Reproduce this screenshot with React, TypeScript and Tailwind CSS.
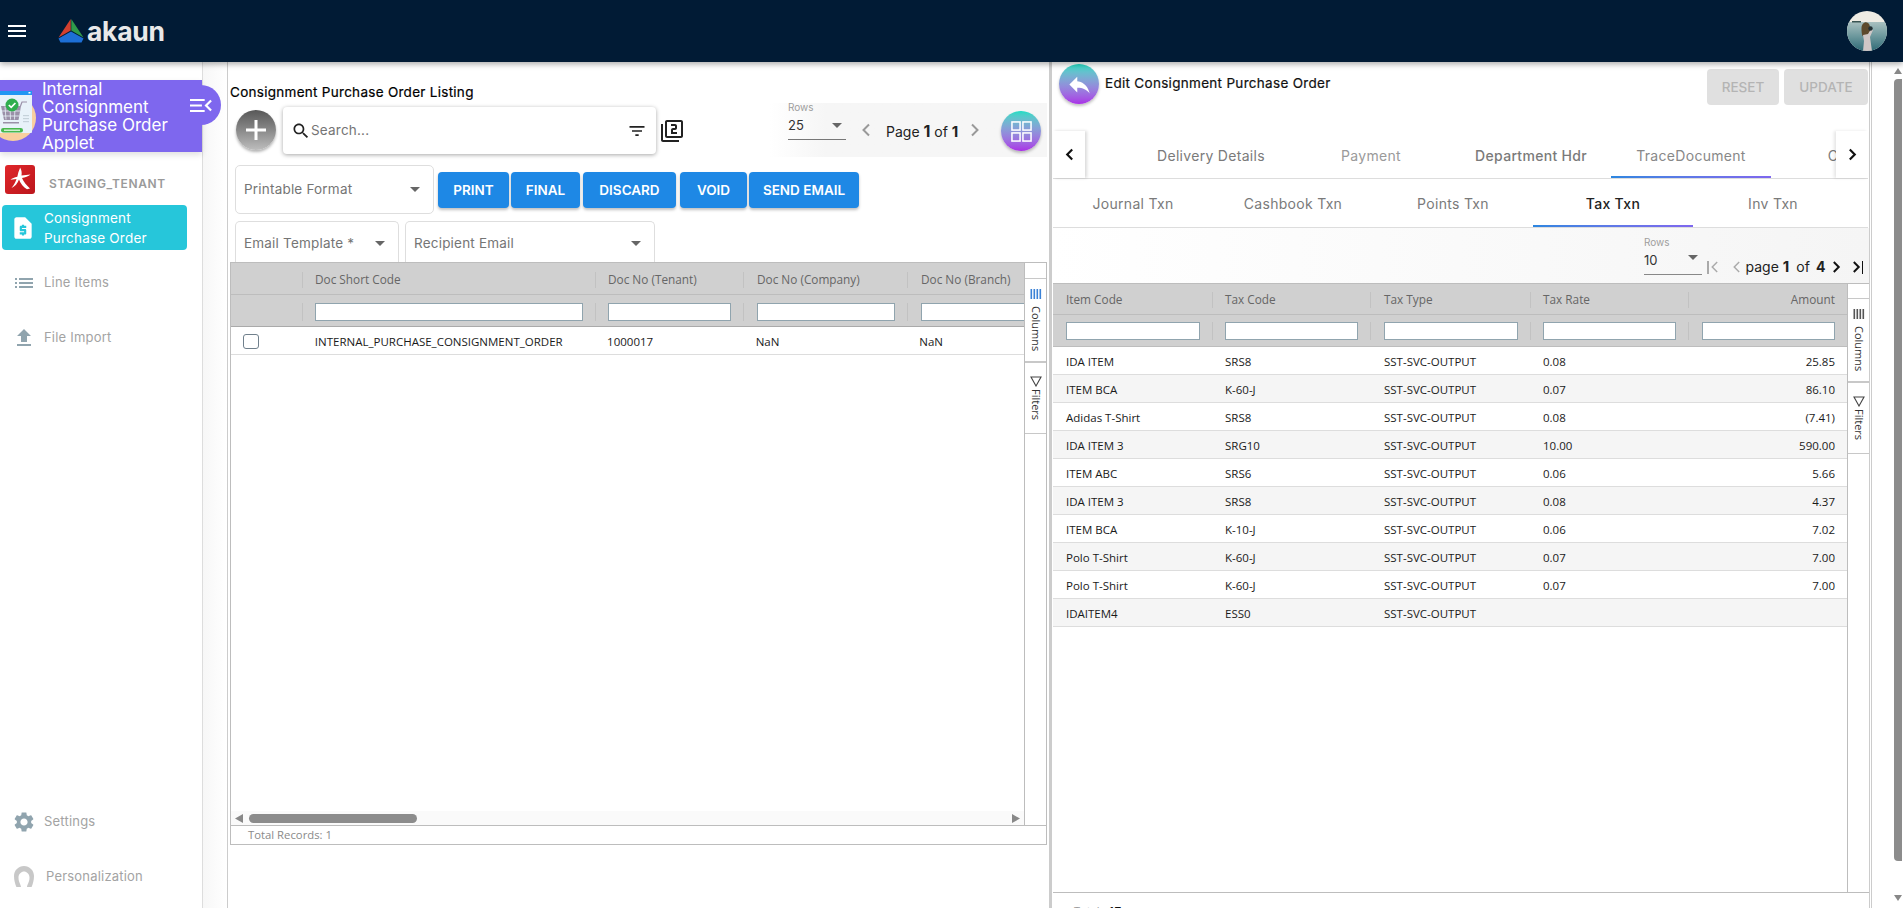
import React from "react";

const P = ({ d, className = "", fill = "currentColor" }: { d: string; className?: string; fill?: string }) => (
  <svg viewBox="0 0 24 24" className={className} fill={fill}><path d={d} /></svg>
);
const icons = {
  menu: "M3 18h18v-2H3v2zm0-5h18v-2H3v2zm0-7v2h18V6H3z",
  search: "M15.5 14h-.79l-.28-.27C15.41 12.59 16 11.11 16 9.5 16 5.91 13.09 3 9.5 3S3 5.91 3 9.5 5.91 16 9.5 16c1.61 0 3.09-.59 4.23-1.57l.27.28v.79l5 4.99L20.49 19l-4.99-5zm-6 0C7.01 14 5 11.99 5 9.5S7.01 5 9.5 5 14 7.01 14 9.5 11.99 14 9.5 14z",
  filter: "M10 18h4v-2h-4v2zM3 6v2h18V6H3zm3 7h12v-2H6v2z",
  filter2: "M3 5H1v16c0 1.1.9 2 2 2h16v-2H3V5zm18-4H7c-1.1 0-2 .9-2 2v14c0 1.1.9 2 2 2h14c1.1 0 2-.9 2-2V3c0-1.1-.9-2-2-2zm0 16H7V3h14v14zm-4-4h-4v-2h2c1.1 0 2-.89 2-2V7c0-1.11-.9-2-2-2h-4v2h4v2h-2c-1.1 0-2 .89-2 2v4h6v-2z",
  reply: "M10 9V5l-7 7 7 7v-4.1c5 0 8.5 1.6 11 5.1-1-5-4-10-11-11z",
  settings: "M19.14 12.94c.04-.3.06-.61.06-.94 0-.32-.02-.64-.07-.94l2.03-1.58c.18-.14.23-.41.12-.61l-1.92-3.32c-.12-.22-.37-.29-.59-.22l-2.39.96c-.5-.38-1.03-.7-1.62-.94l-.36-2.54c-.04-.24-.24-.41-.48-.41h-3.84c-.24 0-.43.17-.47.41l-.36 2.54c-.59.24-1.13.57-1.62.94l-2.39-.96c-.22-.08-.47 0-.59.22L2.74 8.87c-.12.21-.08.47.12.61l2.03 1.58c-.05.3-.09.63-.09.94s.02.64.07.94l-2.03 1.58c-.18.14-.23.41-.12.61l1.92 3.32c.12.22.37.29.59.22l2.39-.96c.5.38 1.03.7 1.62.94l.36 2.54c.05.24.24.41.48.41h3.84c.24 0 .44-.17.47-.41l.36-2.54c.59-.24 1.13-.56 1.62-.94l2.39.96c.22.08.47 0 .59-.22l1.92-3.32c.12-.22.07-.47-.12-.61l-2.01-1.58zM12 15.6c-1.98 0-3.6-1.62-3.6-3.6s1.62-3.6 3.6-3.6 3.6 1.62 3.6 3.6-1.62 3.6-3.6 3.6z",
  list: "M3 13h2v-2H3v2zm0 4h2v-2H3v2zm0-8h2V7H3v2zm4 4h14v-2H7v2zm0 4h14v-2H7v2zM7 7v2h14V7H7z",
  upload: "M9 16h6v-6h4l-7-7-7 7h4zm-4 2h14v2H5z",
  quote: "M14 2H6c-1.1 0-1.99.9-1.99 2L4 20c0 1.1.89 2 1.99 2H18c1.1 0 2-.9 2-2V8l-6-6zm1 10h-4v1h3c.55 0 1 .45 1 1v3c0 .55-.45 1-1 1h-1v1h-2v-1H9v-2h4v-1h-3c-.55 0-1-.45-1-1v-3c0-.55.45-1 1-1h1V9h2v1h2v2z",
  person: "M12 1c5.5 0 10 4.4 10 10 0 4.6-1.2 8-2.400 11H15c0-2.400 2.500-4.800 2.500-9.600 0-3.400-2.900-5.900-5.500-5.900S6.500 9 6.500 12.400c0 4.800 2.500 7.200 2.500 9.600H4.400C3.200 19 2 15.600 2 11 2 5.400 6.500 1 12 1z",
};

const Caret = ({ className = "" }: { className?: string }) => (
  <svg viewBox="0 0 10 5" className={`w-[10px] h-[5px] ${className}`} fill="#666"><path d="M0 0h10L5 5z" /></svg>
);
const Chevron = ({ dir, className = "", w = 2 }: { dir: "l" | "r"; className?: string; w?: number }) => (
  <svg viewBox="0 0 10 14" className={className} fill="none" stroke="currentColor" strokeWidth={w}>
    <path d={dir === "l" ? "M8 1.5 2.5 7 8 12.5" : "M2 1.5 7.5 7 2 12.5"} />
  </svg>
);

const Logo = () => (
  <svg viewBox="0 0 26 24" className="w-[26px] h-[24px]">
    <path d="M12.7 0 L0.5 18.5 L12.7 11.5 Z" fill="#d2402f" />
    <path d="M13.3 0 L25.5 18.5 L13.3 11.5 Z" fill="#2f9a4a" />
    <path d="M13 12.5 L0.5 19.5 L2.5 23.5 H23.5 L25.5 19.5 Z" fill="#1d6fd6" />
  </svg>
);

const Avatar = () => (
  <svg viewBox="0 0 40 40" className="w-[40px] h-[40px] rounded-full">
    <defs>
      <linearGradient id="sea" x1="0" y1="0" x2="0" y2="1">
        <stop offset="0" stopColor="#a9c0c0" />
        <stop offset="0.5" stopColor="#6b979c" />
        <stop offset="1" stopColor="#2f6a76" />
      </linearGradient>
    </defs>
    <rect width="40" height="40" fill="#efece4" />
    <rect y="11" width="40" height="29" fill="url(#sea)" />
    <rect x="5" y="10" width="9" height="1.5" fill="#3a5553" />
    <path d="M14.5 17c0-6 6-8 8-3 1 3 1 6 0 9l-2 3-5-1c-1-3-1-5-1-8z" fill="#5d4a2c" />
    <path d="M16 24l5-1 3-5 2 1-3 7 2 14h-9l1-10z" fill="#cfc7c6" />
    <circle cx="23.5" cy="17.5" r="2.2" fill="#233034" />
  </svg>
);

const CartIcon = () => (
  <svg viewBox="0 0 40 50" className="w-[40px] h-[50px] shrink-0">
    <circle cx="13" cy="27" r="23" fill="#f8cf9f" />
    <rect x="-8" y="0" width="40" height="42" rx="1" fill="#e8f2f9" />
    <rect x="-8" y="0" width="40" height="4" fill="#2196f3" />
    <rect x="28.5" y="1" width="2" height="1.5" fill="#fff" />
    <path d="M1 15h20l-2.5 14H4z" fill="#9a90a8" />
    <path d="M5 15.500l1 13M10 15.500l.5 13M15 15.500l-.5 13M2 20h18M3 25h16" stroke="#e8f2f9" strokeWidth="0.8" />
    <path d="M20.500 15l1.500-4h5" stroke="#9a90a8" strokeWidth="1.2" fill="none" />
    <rect x="3" y="31" width="16" height="1.5" fill="#9a90a8" />
    <circle cx="12" cy="14" r="6.5" fill="#2fae4e" />
    <path d="M8.800 14l2.400 2.400L15.400 12" stroke="#fff" strokeWidth="1.7" fill="none" />
    <rect x="1" y="37" width="22" height="4.5" rx="2.2" fill="#48b84d" />
    <rect x="4" y="38.5" width="16" height="1.5" fill="#cfeed0" />
    <rect x="23" y="24" width="6" height="1.2" fill="#c5d2da" />
    <rect x="23" y="27" width="6" height="1.2" fill="#c5d2da" />
    <rect x="23" y="30" width="6" height="1.2" fill="#c5d2da" />
  </svg>
);

const TenantLogo = () => (
  <svg viewBox="0 0 30 29" className="w-[30px] h-[29px] rounded-[3px]">
    <defs>
      <linearGradient id="tl" x1="0" y1="0" x2="1" y2="1">
        <stop offset="0" stopColor="#e0262a" />
        <stop offset="1" stopColor="#bb161c" />
      </linearGradient>
    </defs>
    <rect width="30" height="29" fill="url(#tl)" />
    <path d="M15 2.500c1.500 2 2 5 1.500 8l9-1c-2 2-5.500 3-8.500 3.500 1.500 3.500 4.500 7.500 8 10.500l-3 .8c-3.500-2-6.500-5.500-8-9.800-1.500 4-4 7-7.500 8.500 2.500-3 4-6 5-9l-6 .8c1.500-1.500 4-2.300 6.800-3 .5-3 1.500-6 2.700-8.800z" fill="#fff" />
  </svg>
);

const NavItem = ({ d, label, textClass = "ml-[8px]", iconClass = "text-[#90a4ae]", box = "h-[54px]" }: { d: string; label: string; textClass?: string; iconClass?: string; box?: string }) => (
  <div className={`${box} flex items-center pl-[12px]`}>
    <P d={d} className={`w-[24px] h-[24px] ${iconClass}`} />
    <span className={`${textClass} text-[13px] text-[#a3a3a3] tracking-[0.2px]`}>{label}</span>
  </div>
);

const Sidebar = () => (
  <aside className="w-[203px] shrink-0 border-r border-[#dddddd] flex flex-col relative font-['Inter',sans-serif]">
    <div className="mt-[18px] h-[72px] bg-[#7e67ee] flex items-center relative shadow-[0_3px_6px_rgba(0,0,0,0.12)]">
      <div className="w-[42px] shrink-0 overflow-hidden"><CartIcon /></div>
      <div className="text-white text-[17px] leading-[18.2px] w-[155px]">Internal Consignment Purchase Order Applet</div>
      <div className="absolute left-[190px] top-[5px] w-[31px] h-[40px] bg-[#7e67ee] rounded-r-[20px] flex items-center justify-center pr-[9px]">
        <svg viewBox="0 0 24 16" className="w-[22px] h-[15px] shrink-0" fill="none" stroke="#fff" strokeWidth="2.4">
          <path d="M0 2h16M0 8h13M0 14h16M23 2.500 17.500 8l5.500 5.500" />
        </svg>
      </div>
    </div>
    <div className="mt-[13px] pl-[5px] flex items-start h-[29px]">
      <TenantLogo />
      <span className="ml-[14px] mt-[12px] text-[12px] font-semibold tracking-[0.6px] text-[#9a9a9a] leading-[14px]">STAGING_TENANT</span>
    </div>
    <div className="mt-[11px] ml-[2px] w-[185px] h-[45px] bg-[#26c6da] rounded-[4px] flex items-center pl-[8px] text-white">
      <P d={icons.quote} className="w-[26px] h-[26px] shrink-0" />
      <div className="ml-[8px] text-[13.5px] leading-[20px] w-[130px] tracking-[0.2px]">Consignment Purchase Order</div>
    </div>
    <div className="mt-[6px]">
      <NavItem d={icons.list} label="Line Items" />
      <NavItem d={icons.upload} label="File Import" box="h-[54px] pt-[2px]" />
    </div>
    <div className="mt-auto pb-[4px]">
      <NavItem d={icons.settings} label="Settings" />
      <NavItem d={icons.person} label="Personalization" textClass="ml-[10px]" iconClass="text-[#c8c8c8]" box="h-[54px] mt-[1px]" />
    </div>
  </aside>
);

const Field = ({ label, className = "", open = false }: { label: string; className?: string; open?: boolean }) => (
  <div className={`border border-[#dedede] ${open ? "border-b-0 rounded-t-[5px] h-[41px] pt-[3px]" : "rounded-[5px] h-[49px]"} flex items-center justify-between pl-[8px] pr-[13px] text-[13.5px] text-[#757575] tracking-[0.2px] font-['Inter',sans-serif] ${className}`}>
    <span>{label}</span>
    <Caret />
  </div>
);

const Btn = ({ label, className }: { label: string; className: string }) => (
  <div className={`h-[36px] rounded-[4px] bg-[#1e88e5] text-white font-semibold text-[13.5px] flex items-center justify-center shadow-[0_2px_3px_rgba(0,0,0,0.25)] ${className}`}>{label}</div>
);

const GradCircle = ({ children, className = "" }: { children: React.ReactNode; className?: string }) => (
  <div className={`w-[40px] h-[40px] shrink-0 rounded-full bg-linear-to-b from-[#15dcc4] to-[#a92ee6] flex items-center justify-center text-white shadow-[0_2px_3px_rgba(0,0,0,0.25)] ${className}`}>{children}</div>
);

const ToolPanel = ({ top, colBars }: { top: string; colBars: string }) => (
  <div className="w-[22px] shrink-0 border-l border-[#bdbdbd] flex flex-col text-[#333] font-['Open_Sans',sans-serif]">
    <div className={`${top} border-b border-[#c8c8c8] shrink-0`} />
    <div className="h-[84px] border-b-[2px] border-[#c8c8c8] flex flex-col items-center pt-[10px]">
      <svg viewBox="0 0 12 10" className="w-[12px] h-[10px]">
        {[0.5, 3.5, 6.5, 9.5].map((x) => <rect key={x} x={x} width="1.6" height="10" fill={colBars} />)}
      </svg>
      <span className="mt-[7px] [writing-mode:vertical-rl] text-[11px] leading-[14px]">Columns</span>
    </div>
    <div className="h-[71px] border-b border-[#c8c8c8] flex flex-col items-center pt-[13px]">
      <svg viewBox="0 0 12 11" className="w-[12px] h-[11px]" fill="none" stroke="#444" strokeWidth="1.1"><path d="M1 1h10L6 10z" /></svg>
      <span className="mt-[2px] [writing-mode:vertical-rl] text-[11px] leading-[14px]">Filters</span>
    </div>
  </div>
);

const leftCols = [
  { w: "w-[72px]", label: "", filter: false, pl: "pl-[12px]" },
  { w: "w-[293px]", label: "Doc Short Code", filter: true, pl: "pl-[12px]" },
  { w: "w-[148px]", label: "Doc No (Tenant)", filter: true, pl: "pl-[12px]" },
  { w: "w-[164px]", label: "Doc No (Company)", filter: true, pl: "pl-[13px]" },
  { w: "w-[118px]", label: "Doc No (Branch)", filter: true, last: true, pl: "pl-[13px]" },
];

const LeftPane = () => (
  <section className="w-[822px] shrink-0 pl-[2px] border-l border-[#cccccc] flex flex-col">
    <div className="flex h-[95px]">
      <div className="w-[540px] pt-[22px]">
        <div className="h-[16px] leading-[16px] text-[13.5px] text-black tracking-[0.28px] font-['Inter',sans-serif] whitespace-nowrap [-webkit-text-stroke:0.2px_black]">Consignment Purchase Order Listing</div>
        <div className="mt-[7px] flex items-start">
          <div className="ml-[6px] mt-[3px] w-[40px] h-[40px] shrink-0 rounded-full bg-linear-to-b from-[#585858] to-[#bdbdbd] flex items-center justify-center shadow-[0_2px_3px_rgba(0,0,0,0.3)]">
            <svg viewBox="0 0 20 20" className="w-[20px] h-[20px]" stroke="#fff" strokeWidth="3"><path d="M10 0v20M0 10h20" /></svg>
          </div>
          <div className="ml-[7px] w-[373px] h-[47px] shrink-0 rounded-[4px] bg-white shadow-[0_1px_4px_rgba(0,0,0,0.35)] flex items-center pl-[8px] pr-[9px]">
            <P d={icons.search} className="w-[20px] h-[20px] text-[#222]" />
            <span className="text-[13.5px] text-[#757575] font-['Inter',sans-serif] tracking-[0.2px]">Search...</span>
            <P d={icons.filter} className="w-[20px] h-[20px] text-[#222] ml-auto" />
          </div>
          <P d={icons.filter2} className="ml-[4px] mt-[12px] w-[24px] h-[24px] text-[#222] shrink-0" />
        </div>
      </div>
      <div className="ml-auto mr-[2px] mt-[41px] h-[54px] w-[277px] bg-linear-to-r from-white to-[#f6f6f6] to-20% flex items-start pl-[18px] font-['Inter',sans-serif]">
        <div className="w-[58px] border-b border-[#777] h-[37px] relative shrink-0">
          <div className="text-[10px] text-[#9e9e9e] leading-[10px] mt-[-1px]">Rows</div>
          <div className="text-[13px] text-[#333] leading-[14px] mt-[6px]">25</div>
          <Caret className="absolute right-[4px] top-[20px]" />
        </div>
        <Chevron dir="l" className="ml-[15px] mt-[20px] w-[10px] h-[14px] text-[#999] shrink-0" />
        <div className="ml-[15px] mt-[19px] text-[14px] text-[#222] whitespace-nowrap w-[72px] shrink-0 leading-[18px]">Page <b className="text-[16px]">1</b> of <b className="text-[15px]">1</b></div>
        <Chevron dir="r" className="ml-[12px] mt-[20px] w-[10px] h-[14px] text-[#999] shrink-0" />
        <GradCircle className="ml-[21px] mt-[8px]">
          <svg viewBox="0 0 22 22" className="w-[21px] h-[21px]" fill="none" stroke="#fff" strokeWidth="1.6"><rect x="1" y="1" width="8.5" height="8.5" /><rect x="12.5" y="1" width="8.5" height="8.5" /><rect x="1" y="12.5" width="8.5" height="8.5" /><rect x="12.5" y="12.5" width="8.5" height="8.5" /></svg>
        </GradCircle>
      </div>
    </div>

    <div className="mt-[8px] ml-[5px] flex items-start">
      <Field label="Printable Format" className="w-[199px] shrink-0" />
      <div className="ml-[4px] mt-[7px] flex font-['Inter',sans-serif]">
        <Btn label="PRINT" className="w-[71px]" />
        <Btn label="FINAL" className="w-[69px] ml-[2px]" />
        <Btn label="DISCARD" className="w-[93px] ml-[3px]" />
        <Btn label="VOID" className="w-[67px] ml-[4px]" />
        <Btn label="SEND EMAIL" className="w-[110px] ml-[2px]" />
      </div>
    </div>
    <div className="mt-[7px] ml-[5px] flex">
      <Field label="Email Template *" open className="w-[164px]" />
      <Field label="Recipient Email" open className="w-[250px] ml-[6px]" />
    </div>

    <div className="w-[817px] h-[583px] flex flex-col border-r border-l border-b border-[#bdbdbd] font-['Open_Sans',sans-serif] text-[11.5px]">
      <div className="flex-1 flex border-b border-[#bdbdbd] min-h-0 border-t">
        <div className="w-[795px] flex flex-col overflow-hidden">
          <div className="flex h-[32px] pt-[2px] bg-[#d0d0d0] border-b border-[#bdbdbd] shrink-0 items-center text-[#666] text-[11.8px]">
            {leftCols.map((c, i) => (
              <div key={i} className={`${c.w} ${c.pl} shrink-0 h-[16px] flex items-center ${i < leftCols.length - 1 ? "border-r border-[#c2c2c2]" : ""}`}>{c.label}</div>
            ))}
          </div>
          <div className="flex h-[32px] bg-[#d0d0d0] border-b border-[#aaaaaa] shrink-0 items-start pt-[8px]">
            {leftCols.map((c, i) => (
              <div key={i} className={`${c.w} ${c.pl} shrink-0 h-[18px] flex items-center ${c.last ? "" : "pr-[12px] border-r border-[#c2c2c2]"}`}>
                {c.filter && <div className="w-full h-[18px] bg-white border border-[#90a4ae]" />}
              </div>
            ))}
          </div>
          <div className="flex h-[28px] border-b border-[#dddddd] shrink-0 items-center pt-[2px] text-[#1a1a1a]">
            <div className="w-[72px] pl-[12px]"><div className="w-[16px] h-[15px] rounded-[3px] border border-[#70808c]" /></div>
            <div className="w-[293px] pl-[12px]">INTERNAL_PURCHASE_CONSIGNMENT_ORDER</div>
            <div className="w-[148px] pl-[12px]">1000017</div>
            <div className="w-[164px] pl-[13px]">NaN</div>
            <div className="w-[118px] pl-[13px]">NaN</div>
          </div>
          <div className="flex-1" />
          <div className="h-[14px] bg-[#fafafa] shrink-0 flex items-center pl-[4px] pr-[4px]">
            <svg viewBox="0 0 8 9" className="w-[8px] h-[9px]" fill="#888"><path d="M8 0v9L0 4.5z" /></svg>
            <div className="ml-[6px] w-[168px] h-[9px] rounded-full bg-[#8c8c8c]" />
            <svg viewBox="0 0 8 9" className="ml-auto w-[8px] h-[9px]" fill="#888"><path d="M0 0v9l8-4.5z" /></svg>
          </div>
        </div>
        <ToolPanel top="h-[16px]" colBars="#3b82d6" />
      </div>
      <div className="h-[18px] shrink-0 flex items-center pl-[17px] pt-[1px] text-[11.3px] text-[#8a8a8a]">Total Records: 1</div>
    </div>
  </section>
);

const rows = [
  ["IDA ITEM", "SRS8", "0.08", "25.85"],
  ["ITEM BCA", "K-60-J", "0.07", "86.10"],
  ["Adidas T-Shirt", "SRS8", "0.08", "(7.41)"],
  ["IDA ITEM 3", "SRG10", "10.00", "590.00"],
  ["ITEM ABC", "SRS6", "0.06", "5.66"],
  ["IDA ITEM 3", "SRS8", "0.08", "4.37"],
  ["ITEM BCA", "K-10-J", "0.06", "7.02"],
  ["Polo T-Shirt", "K-60-J", "0.07", "7.00"],
  ["Polo T-Shirt", "K-60-J", "0.07", "7.00"],
  ["IDAITEM4", "ESS0", "", ""],
];
const rightW = ["w-[160px]", "w-[158px]", "w-[160px]", "w-[158px]", "w-[158px]"];
const rightPl = ["pl-[13px]", "pl-[12px]", "pl-[13px]", "pl-[12px]", "pl-[13px]"];
const heads = ["Item Code", "Tax Code", "Tax Type", "Tax Rate", "Amount"];

const RightPane = () => (
  <section className="w-[821px] shrink-0 border-l-[3px] border-[#cccccc] border-r flex flex-col font-['Inter',sans-serif] relative">
    <div className="h-[69px] shrink-0 flex items-start pl-[7px]">
      <GradCircle className="mt-[2px]"><P d={icons.reply} className="w-[27px] h-[27px]" /></GradCircle>
      <div className="ml-[6px] mt-[13px] text-[13.5px] leading-[16px] text-[#111] tracking-[0.3px] [-webkit-text-stroke:0.2px_#111]">Edit Consignment Purchase Order</div>
      <div className="ml-auto mt-[7px] mr-[1px] flex text-[13.5px] font-medium text-[#b4b4b4]">
        <div className="w-[72px] h-[36px] rounded-[4px] bg-[#e0e0e0] flex items-center justify-center">RESET</div>
        <div className="ml-[5px] w-[84px] h-[36px] rounded-[4px] bg-[#e0e0e0] flex items-center justify-center">UPDATE</div>
      </div>
    </div>
    <div className="h-[48px] shrink-0 ml-[1px] mr-[1px] border-b border-[#dddddd] flex text-[14px] tracking-[0.3px] text-[#7a7a7a] text-center">
      <div className="w-[32px] shrink-0 flex items-center justify-center text-[#111] shadow-[2px_0_3px_rgba(0,0,0,0.15)] z-10">
        <Chevron dir="l" className="w-[9px] h-[13px]" w={2.4} />
      </div>
      <div className="flex-1 overflow-hidden flex pl-[46px]">
        <div className="w-[160px] shrink-0 pt-[14px]">Delivery Details</div>
        <div className="w-[160px] shrink-0 pt-[14px] text-[#9a9a9a]">Payment</div>
        <div className="w-[160px] shrink-0 pt-[14px] font-medium">Department Hdr</div>
        <div className="w-[160px] shrink-0 pt-[14px] h-[47px] relative text-[#888]">TraceDocument
          <div className="absolute bottom-0 left-0 right-0 h-[2px] bg-linear-to-r from-[#2b86e0] to-[#7e67ee]" />
        </div>
        <div className="w-[160px] shrink-0 pt-[14px]">Contra</div>
      </div>
      <div className="w-[32px] shrink-0 flex items-center justify-center text-[#111] shadow-[-2px_0_3px_rgba(0,0,0,0.1)] z-10 bg-white">
        <Chevron dir="r" className="w-[9px] h-[13px]" w={2.4} />
      </div>
    </div>
    <div className="h-[49px] shrink-0 ml-[1px] mr-[1px] border-b border-[#dddddd] flex text-[14px] tracking-[0.3px] text-[#7a7a7a] text-center">
      {["Journal Txn", "Cashbook Txn", "Points Txn", "Tax Txn", "Inv Txn"].map((t) => (
        <div key={t} className={`w-[160px] shrink-0 pt-[14px] h-[48px] relative ${t === "Tax Txn" ? "text-[#222] font-medium" : ""}`}>{t}
          {t === "Tax Txn" && <div className="absolute bottom-0 left-0 right-0 h-[2px] bg-linear-to-r from-[#2b86e0] to-[#7e67ee]" />}
        </div>
      ))}
    </div>
    <div className="h-[55px] shrink-0 bg-linear-to-r from-white to-[#f5f5f5] flex items-start pl-[592px]">
      <div className="w-[58px] h-[47px] border-b border-[#888] relative shrink-0">
        <div className="text-[10px] text-[#9e9e9e] leading-[10px] mt-[9px]">Rows</div>
        <div className="text-[13px] text-[#333] leading-[14px] mt-[6px]">10</div>
        <Caret className="absolute right-[4px] top-[27px]" />
      </div>
      <div className="ml-[5px] mt-[32px] flex items-center text-[#777] h-[14px] shrink-0">
        <span className="w-[1.5px] h-[13px] bg-[#aaa]" />
        <Chevron dir="l" className="ml-[1px] w-[9px] h-[14px] text-[#aaa]" w={1.6} />
        <Chevron dir="l" className="ml-[13px] w-[9px] h-[14px] text-[#aaa]" w={1.6} />
        <div className="ml-[5px] text-[14px] text-[#222] whitespace-nowrap leading-[14px] w-[86px] flex items-baseline">
          <span>page</span><b className="ml-[4px] text-[15px]">1</b><span className="ml-[7px]">of</span><b className="ml-[6px]">4</b>
        </div>
        <Chevron dir="r" className="w-[9px] h-[14px] text-[#111]" w={2.2} />
        <Chevron dir="r" className="ml-[11px] w-[9px] h-[14px] text-[#111]" w={2.2} />
        <span className="ml-[1px] w-[1.8px] h-[13px] bg-[#111]" />
      </div>
    </div>
    <div className="flex-1 min-h-0 ml-[1px] flex border-t border-[#bdbdbd] border-b font-['Open_Sans',sans-serif] text-[11.5px]">
      <div className="w-[794px] flex flex-col">
        <div className="flex h-[31px] pt-[2px] bg-[#d0d0d0] border-b border-[#bdbdbd] items-center text-[#666] text-[11.8px] shrink-0">
          {heads.map((h, i) => (
            <div key={h} className={`${rightW[i]} ${rightPl[i]} h-[16px] flex items-center pr-[12px] ${i === 4 ? "justify-end" : "border-r border-[#c2c2c2]"}`}>{h}</div>
          ))}
        </div>
        <div className="flex h-[32px] bg-[#d0d0d0] items-start pt-[7px] border-b border-[#bdbdbd] shrink-0">
          {heads.map((h, i) => (
            <div key={h} className={`${rightW[i]} ${rightPl[i]} h-[18px] pr-[12px] ${i === 4 ? "" : "border-r border-[#c2c2c2]"}`}>
              <div className="w-full h-[18px] bg-white border border-[#90a4ae]" />
            </div>
          ))}
        </div>
        {rows.map((r, i) => (
          <div key={i} className={`flex h-[28px] shrink-0 items-center pt-[3px] text-[#1a1a1a] border-b border-[#dddddd] ${i % 2 ? "bg-[#f5f5f5]" : "bg-white"}`}>
            <div className="w-[160px] pl-[13px]">{r[0]}</div>
            <div className="w-[158px] pl-[12px]">{r[1]}</div>
            <div className="w-[160px] pl-[13px]">SST-SVC-OUTPUT</div>
            <div className="w-[158px] pl-[12px]">{r[2]}</div>
            <div className="w-[158px] pr-[12px] text-right">{r[3]}</div>
          </div>
        ))}
      </div>
      <ToolPanel top="h-[15px]" colBars="#555" />
    </div>
    <div className="h-[15px] shrink-0 pl-[22px] pt-[11px] text-[11px] leading-[14px] overflow-hidden text-[#999] font-['Open_Sans',sans-serif]">Total <b className="text-[#111] ml-[6px]">17</b></div>
  </section>
);

export default function App() {
  return (
    <div className="w-[1903px] h-[908px] overflow-hidden flex flex-col bg-white">
      <header className="h-[62px] shrink-0 bg-[#011b35] flex items-center pl-[5px] pr-[16px] shadow-[0_2px_6px_rgba(0,0,0,0.35)] z-20 relative">
        <P d={icons.menu} className="w-[24px] h-[24px] text-white" />
        <div className="ml-[29px] flex items-center">
          <Logo />
          <span className="ml-[3px] text-[26.5px] font-bold text-[#e9e9e9] leading-[26px] tracking-[-0.3px] font-['Inter',sans-serif]">akaun</span>
        </div>
        <div className="ml-auto"><Avatar /></div>
      </header>
      <main className="flex-1 flex min-h-0">
        <Sidebar />
        <div className="w-[24px] shrink-0 bg-linear-to-r from-[#f7f7f7] to-white" />
        <LeftPane />
        <RightPane />
        <div className="w-[1px] shrink-0 ml-[1px] bg-[#cccccc]" />
        <div className="w-[30px] shrink-0 flex flex-col items-end pt-[6px] bg-white">
          <svg viewBox="0 0 8 6" className="w-[8px] h-[6px]" fill="#888"><path d="M4 0l4 6H0z" /></svg>
          <div className="mt-[5px] w-[8px] h-[782px] rounded-l-[4px] bg-[#8c8c8c]" />
          <svg viewBox="0 0 8 6" className="mt-[34px] w-[8px] h-[6px]" fill="#888"><path d="M4 6l4-6H0z" /></svg>
        </div>
      </main>
    </div>
  );
}
